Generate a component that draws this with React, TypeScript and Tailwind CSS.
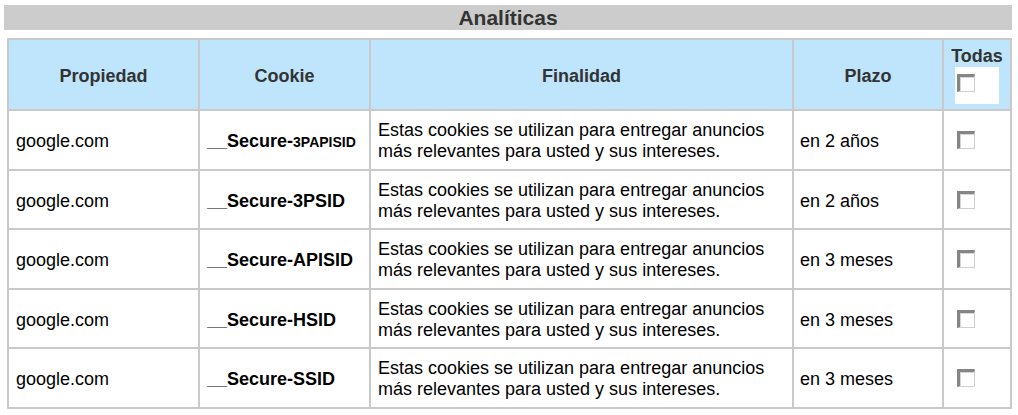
import React from "react";

type Row = { prop: string; cookie: React.ReactNode; plazo: string };

const fin = ["Estas cookies se utilizan para entregar anuncios", "más relevantes para usted y sus intereses."];

const rows: Row[] = [
  {
    prop: "google.com",
    cookie: (
      <>
        __Secure-<span className="text-[14px]">3PAPISID</span>
      </>
    ),
    plazo: "en 2 años",
  },
  { prop: "google.com", cookie: "__Secure-3PSID", plazo: "en 2 años" },
  { prop: "google.com", cookie: "__Secure-APISID", plazo: "en 3 meses" },
  { prop: "google.com", cookie: "__Secure-HSID", plazo: "en 3 meses" },
  { prop: "google.com", cookie: "__Secure-SSID", plazo: "en 3 meses" },
];

const heights = ["h-[60px]", "h-[59px]", "h-[60px]", "h-[59px]", "h-[60px]"];

function Check() {
  return (
    <div className="w-[18px] h-[18px] bg-white border-t-[3px] border-l-[3px] border-r border-b border-t-[#858585] border-l-[#858585] border-r-[#cfcfcf] border-b-[#cfcfcf] shadow-[inset_1px_1px_0_#d6d6d6]" />
  );
}

export default function App() {
  const cell = "border-r-2 border-b-2 border-[#c9c9c9]";
  return (
    <div className="w-[1018px] h-[415px] bg-white pt-[5px] font-['Liberation_Sans',Arial,sans-serif]">
      <div className="ml-[4px] w-[1008px] h-[25px] bg-[#cccccc] flex items-center justify-center">
        <span className="text-[21px] leading-none font-bold text-[#333333]">Analíticas</span>
      </div>
      <table className="ml-[7px] mt-[8px] w-[1005px] table-fixed border-separate border-spacing-0 border-l-2 border-t-2 border-[#c9c9c9] text-[18px] leading-[21px] text-black">
        <colgroup>
          <col className="w-[191px]" />
          <col className="w-[171px]" />
          <col className="w-[423px]" />
          <col className="w-[150px]" />
          <col className="w-[68px]" />
        </colgroup>
        <thead>
          <tr className="h-[71px] bg-[#bee5fc] text-[#333333]">
            <th className={`${cell} font-bold text-center pt-[3px]`}>Propiedad</th>
            <th className={`${cell} font-bold text-center pt-[3px]`}>Cookie</th>
            <th className={`${cell} font-bold text-center pt-[3px]`}>Finalidad</th>
            <th className={`${cell} font-bold text-center pt-[3px]`}>Plazo</th>
            <th className={`${cell} font-bold text-center p-0`}>
              <div className="flex flex-col items-center">
                <span>Todas</span>
                <div className="w-[44px] h-[37px] bg-white pt-[7px] pl-[2px]">
                  <Check />
                </div>
              </div>
            </th>
          </tr>
        </thead>
        <tbody>
          {rows.map((r, i) => (
            <tr key={i} className={heights[i]}>
              <td className={`${cell} pl-[7px] pt-[3px]`}>{r.prop}</td>
              <td className={`${cell} pl-[7px] pt-[3px] font-bold whitespace-nowrap`}>{r.cookie}</td>
              <td className={`${cell} pl-[7px] pt-[2px]`}>
                <div>{fin[0]}</div>
                <div>{fin[1]}</div>
              </td>
              <td className={`${cell} pl-[6px] pt-[3px]`}>{r.plazo}</td>
              <td className={`${cell} pl-[13px]`}>
                <Check />
              </td>
            </tr>
          ))}
        </tbody>
      </table>
    </div>
  );
}
